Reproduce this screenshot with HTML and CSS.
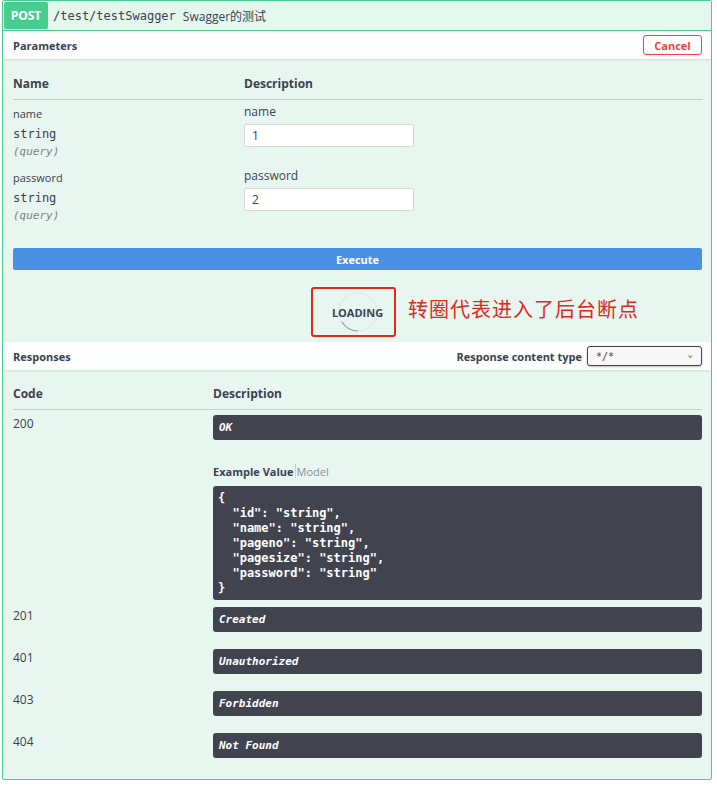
FILE: index.html
```html
<!DOCTYPE html>
<html>
<head>
<meta charset="utf-8">
<link rel="stylesheet" href="styles.css">
</head>
<body>
<div class="opblock">
  <div class="summary">
    <span class="method">POST</span>
    <span class="path">/test/testSwagger</span>
    <span class="desc">Swagger的测试</span>
  </div>
  <div class="section-header">
    <span class="section-title">Parameters</span>
    <button class="cancel">Cancel</button>
  </div>
  <div class="params">
    <div class="thead">
      <div class="col-name">Name</div>
      <div class="col-desc">Description</div>
    </div>
    <div class="prow">
      <div class="col-name">
        <div class="pname">name</div>
        <div class="ptype">string</div>
        <div class="pin">(query)</div>
      </div>
      <div class="col-desc">
        <div class="pdesc">name</div>
        <input class="pinput" type="text" value="1">
      </div>
    </div>
    <div class="prow">
      <div class="col-name">
        <div class="pname">password</div>
        <div class="ptype">string</div>
        <div class="pin">(query)</div>
      </div>
      <div class="col-desc">
        <div class="pdesc">password</div>
        <input class="pinput" type="text" value="2">
      </div>
    </div>
  </div>
  <div class="execute-wrap">
    <button class="execute">Execute</button>
  </div>
  <div class="loading-area">
    <div class="loading-box">
      <div class="loading">
        <svg class="spinner" width="44" height="44" viewBox="0 0 44 44">
          <circle cx="22" cy="22" r="19" fill="none" stroke="#e3e7e6" stroke-width="1.2"/>
          <path d="M22 41 A19 19 0 0 1 6 32" fill="none" stroke="#9a9ea4" stroke-width="1.2"/>
        </svg>
        <span class="loading-text">LOADING</span>
      </div>
    </div>
    <span class="note">转圈代表进入了后台断点</span>
  </div>
  <div class="section-header resp-header">
    <span class="section-title">Responses</span>
    <div class="ctype">
      <span class="ctype-label">Response content type</span>
      <div class="select"><span>*/*</span><span class="caret">&#8964;</span></div>
    </div>
  </div>
  <div class="responses">
    <div class="thead rhead">
      <div class="col-code">Code</div>
      <div class="col-rdesc">Description</div>
    </div>
    <div class="rrow first">
      <div class="col-code code">200</div>
      <div class="col-rdesc">
        <div class="rbox">OK</div>
        <div class="tabs"><span class="tab-active">Example Value</span><span class="tab-sep"></span><span class="tab">Model</span></div>
        <pre class="example">{
  "id": "string",
  "name": "string",
  "pageno": "string",
  "pagesize": "string",
  "password": "string"
}</pre>
      </div>
    </div>
    <div class="rrow">
      <div class="col-code code">201</div>
      <div class="col-rdesc"><div class="rbox">Created</div></div>
    </div>
    <div class="rrow">
      <div class="col-code code">401</div>
      <div class="col-rdesc"><div class="rbox">Unauthorized</div></div>
    </div>
    <div class="rrow">
      <div class="col-code code">403</div>
      <div class="col-rdesc"><div class="rbox">Forbidden</div></div>
    </div>
    <div class="rrow">
      <div class="col-code code">404</div>
      <div class="col-rdesc"><div class="rbox">Not Found</div></div>
    </div>
  </div>
</div>
</body>
</html>
```
FILE: styles.css
```css
* { box-sizing: border-box; }
body {
  margin: 0;
  background: #fff;
  font-family: "Open Sans", "Noto Sans CJK SC", sans-serif;
  color: #3b4151;
}
.opblock {
  margin: 0 5px 0 2px;
  width: 710px;
  height: 780px;
  border: 1px solid #49cc90;
  border-radius: 2px;
  background: #e8f6f0;
}
.summary {
  display: flex;
  align-items: center;
  height: 30px;
  padding: 1px 0 1px 1px;
  background: #e3f7ed;
  border-bottom: 1px solid #49cc90;
}
.method {
  width: 44px;
  height: 27px;
  background: #49cc90;
  color: #fff;
  font-weight: 700;
  font-size: 12px;
  display: flex;
  align-items: center;
  justify-content: center;
  border-radius: 2px;
  text-shadow: 0 1px 0 rgba(0,0,0,.1);
}
.path {
  margin-left: 5px;
  font-family: "DejaVu Sans Mono", monospace;
  font-size: 12px;
  color: #3b4151;
}
.desc {
  margin-left: 7px;
  font-size: 12px;
  color: #3b4151;
}
.section-header {
  display: flex;
  align-items: center;
  justify-content: space-between;
  height: 28px;
  padding: 0 9px 0 10px;
  background: rgba(255,255,255,.85);
  box-shadow: 0 1px 2px rgba(0,0,0,.1);
}
.section-title {
  font-size: 11px;
  font-weight: 700;
}
.cancel {
  width: 59px;
  height: 20px;
  border: 1px solid #f93e3e;
  border-radius: 3px;
  background: transparent;
  color: #f93e3e;
  font-family: "Open Sans", sans-serif;
  font-weight: 700;
  font-size: 11px;
  padding: 0;
}
.params {
  padding: 0 8px 0 10px;
}
.thead {
  display: flex;
  align-items: flex-end;
  height: 41px;
  padding-bottom: 7px;
  border-bottom: 1px solid rgba(59,65,81,.2);
  font-size: 12px;
  font-weight: 700;
}
.col-name { width: 231px; flex: none; }
.col-desc { flex: 1; }
.prow {
  display: flex;
  height: 64px;
  padding-top: 7px;
}
.pname {
  font-size: 11px;
  line-height: 14px;
  color: #3b4151;
}
.ptype {
  font-family: "DejaVu Sans Mono", monospace;
  font-size: 12px;
  line-height: 18px;
  margin-top: 4px;
}
.pin {
  font-family: "DejaVu Sans Mono", monospace;
  font-size: 11px;
  font-style: italic;
  color: #808080;
  line-height: 16px;
  margin-top: 1px;
}
.pdesc {
  font-size: 12px;
  line-height: 14px;
  margin-top: -2px;
}
.pinput {
  display: block;
  margin-top: 5px;
  width: 170px;
  height: 23px;
  border: 1px solid #d9d9d9;
  border-radius: 2px;
  background: #fff;
  padding: 0 7px;
  font-family: "Open Sans", sans-serif;
  font-size: 12px;
  color: #3b4151;
}
.execute-wrap {
  padding: 20px 9px 0 10px;
}
.execute {
  display: block;
  width: 100%;
  height: 22px;
  border: none;
  border-radius: 2px;
  background: #4990e2;
  color: #fff;
  font-family: "Open Sans", sans-serif;
  font-weight: 700;
  font-size: 11px;
  padding: 0;
}
.loading-area {
  display: flex;
  align-items: flex-start;
  height: 72px;
  padding-left: 308px;
  padding-top: 17px;
}
.loading-box {
  width: 85px;
  height: 50px;
  border: 2px solid #e0281d;
  border-radius: 3px;
  display: flex;
  align-items: center;
  justify-content: center;
}
.loading {
  position: relative;
  width: 44px;
  height: 44px;
  margin-left: 8px;
  display: flex;
  align-items: center;
  justify-content: center;
}
.spinner {
  position: absolute;
  left: 0;
  top: 0;
}
.loading-text {
  position: relative;
  font-size: 11px;
  font-weight: 700;
  color: #3b4151;
}
.note {
  margin-left: 12px;
  margin-top: 8px;
  font-size: 20px;
  line-height: 30px;
  color: #e0281d;
  letter-spacing: 1px;
}
.resp-header { padding-right: 9px; }
.ctype {
  display: flex;
  align-items: center;
}
.ctype-label {
  font-size: 11px;
  font-weight: 700;
  margin-right: 5px;
}
.select {
  display: flex;
  align-items: center;
  justify-content: space-between;
  width: 115px;
  height: 20px;
  border: 1px solid #41444e;
  border-radius: 3px;
  background: #f7f7f7;
  padding: 0 8px;
  font-size: 10px;
  font-family: "DejaVu Sans Mono", monospace;
  box-shadow: 0 1px 2px rgba(0,0,0,.25);
}
.caret { font-size: 9px; margin-top: -4px; }
.responses {
  padding: 0 9px 0 10px;
}
.rhead {
  height: 40px;
  padding-bottom: 7px;
}
.col-code { width: 200px; flex: none; }
.col-rdesc { flex: 1; }
.rrow {
  display: flex;
  padding-top: 5px;
  height: 42px;
}
.rrow.first { height: 192px; }
.code {
  font-size: 12px;
  line-height: 18px;
}
.rbox {
  height: 25px;
  background: #41444e;
  border-radius: 3px;
  color: #fff;
  font-family: "DejaVu Sans Mono", monospace;
  font-weight: 700;
  font-style: italic;
  font-size: 11px;
  line-height: 25px;
  padding-left: 6px;
}
.tabs {
  display: flex;
  align-items: center;
  margin-top: 23px;
  height: 16px;
  font-size: 11px;
}
.tab-active { font-weight: 700; }
.tab-sep {
  width: 1px;
  height: 14px;
  background: #c9ccd2;
  margin: 0 1px;
}
.tab { color: #8c8f96; }
.example {
  margin: 7px 0 0 0;
  height: 114px;
  background: #41444e;
  border-radius: 3px;
  color: #fff;
  font-family: "DejaVu Sans Mono", monospace;
  font-weight: 700;
  font-size: 12px;
  line-height: 15px;
  padding: 5px 5px 4px;
  white-space: pre;
}
```
